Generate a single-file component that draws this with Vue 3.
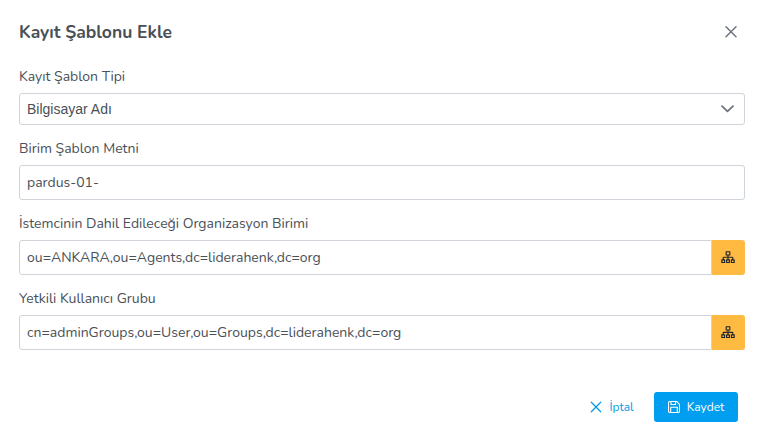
<script setup>
import { ref } from 'vue'

const prefix = ref('pardus-01-')
const unit = ref('ou=ANKARA,ou=Agents,dc=liderahenk,dc=org')
const group = ref('cn=adminGroups,ou=User,ou=Groups,dc=liderahenk,dc=org')
const sitemap = 'M5.2.7h3.600v3.300H5.200zM7 4v4.800M2.200 8.800V7.100a.8.8 0 0 1 .8-.8h8a.8.8 0 0 1 .8.8v1.700M.8 8.800h2.800v2.700H.8zM5.600 8.800h2.800v2.700H5.600zM10.400 8.800h2.800v2.700h-2.800z'
</script>

<template>
  <main class="dialog">
    <header class="head">
      <h1 class="title">Kayıt Şablonu Ekle</h1>
      <button class="close" aria-label="Kapat">
        <svg width="12" height="12" viewBox="0 0 12 12"><path d="M1 .8l10 10M11 .8l-10 10" /></svg>
      </button>
    </header>

    <section class="field">
      <label class="label">Kayıt Şablon Tipi</label>
      <div class="control select">
        <span>Bilgisayar Adı</span>
        <svg width="14" height="14" viewBox="0 0 14 14"><path d="M1 4.200L6.500 9.400l5.500-5.200" /></svg>
      </div>
    </section>

    <section class="field">
      <label class="label">Birim Şablon Metni</label>
      <div class="control"><span>{{ prefix }}</span></div>
    </section>

    <section class="field">
      <label class="label">İstemcinin Dahil Edileceği Organizasyon Birimi</label>
      <div class="group">
        <div class="control"><span>{{ unit }}</span></div>
        <button class="pick" aria-label="Birim seç">
          <svg width="14" height="14" viewBox="0 0 14 14"><path :d="sitemap" /></svg>
        </button>
      </div>
    </section>

    <section class="field">
      <label class="label">Yetkili Kullanıcı Grubu</label>
      <div class="group">
        <div class="control"><span>{{ group }}</span></div>
        <button class="pick" aria-label="Grup seç">
          <svg width="14" height="14" viewBox="0 0 14 14"><path :d="sitemap" /></svg>
        </button>
      </div>
    </section>

    <footer class="foot">
      <button class="btn text">
        <svg width="12" height="12" viewBox="0 0 12 12"><path d="M1.300 1.300l9.400 9.400M10.700 1.300l-9.400 9.400" /></svg>
        <span>İptal</span>
      </button>
      <button class="btn primary">
        <svg width="12" height="12" viewBox="0 0 12 12"><path d="M1.800.5h6.900l2.800 2.800v6.900a1.300 1.300 0 0 1-1.300 1.300H1.800A1.300 1.300 0 0 1 .5 10.200V1.800A1.300 1.300 0 0 1 1.800.5zM3 .5v3h4.500v-3M2.700 11.500V6.300h6.600v5.200" /></svg>
        <span>Kaydet</span>
      </button>
    </footer>
  </main>
</template>

<style>
body { margin: 0; background: #fff; }
</style>

<style scoped>
.dialog {
  box-sizing: border-box;
  height: 442px;
  padding: 16px 19px 20px;
  display: flex;
  flex-direction: column;
  font-family: Nunito, Lato, "Noto Sans", sans-serif;
  font-size: 14px;
  color: #495057;
}
button { border: 0; padding: 0; margin: 0; background: none; font: inherit; display: flex; align-items: center; justify-content: center; }
svg { display: block; fill: none; stroke: currentColor; stroke-linecap: round; stroke-linejoin: round; flex: none; }
.head { display: flex; align-items: center; justify-content: space-between; height: 32px; margin-bottom: 18px; }
.title { margin: 0; font-size: 17.500px; line-height: 24px; font-weight: 700; }
.close { width: 28px; height: 28px; color: #6c757d; }
.close svg { stroke-width: 1.500; }
.field { margin-bottom: 13px; }
.label { display: block; height: 21px; line-height: 21px; margin-bottom: 6px; white-space: nowrap; }
.control {
  box-sizing: border-box;
  height: 35px;
  flex: 1;
  padding: 0 7px;
  display: flex;
  align-items: center;
  border: 1px solid #ced4da;
  border-radius: 3px;
  white-space: nowrap;
}
.select { height: 32px; justify-content: space-between; padding-right: 9px; font-family: "Liberation Sans", sans-serif; }
.select svg { color: #6c757d; stroke-width: 1.800; }
.group { display: flex; }
.group .control { border-radius: 3px 0 0 3px; }
.pick { box-sizing: border-box; width: 33px; height: 35px; padding-right: 1px; background: #ffba42; color: #212529; border-radius: 0 3px 3px 0; }
.pick svg { stroke-width: 1.150; }
.foot { margin-top: auto; padding-right: 7px; display: flex; justify-content: flex-end; gap: 7px; font-size: 12px; }
.btn { height: 30px; gap: 7px; border-radius: 3px; }
.text { width: 70px; color: #039be5; }
.text svg { stroke-width: 1.300; }
.primary { width: 84px; background: #009ef1; color: #fff; }
.primary svg { stroke-width: 1.100; }
</style>
